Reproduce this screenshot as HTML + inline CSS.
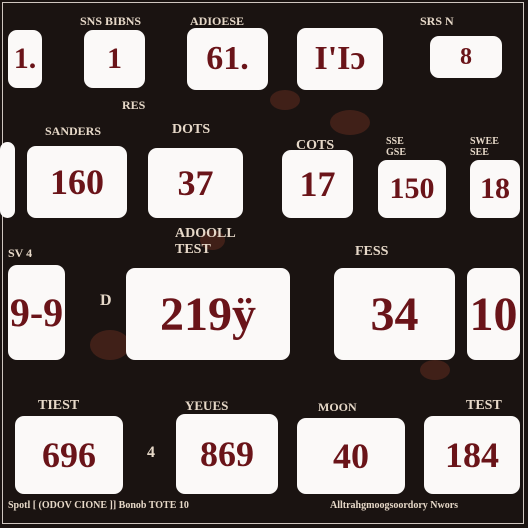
<!DOCTYPE html>
<html><head><meta charset="utf-8"><style>
html,body{margin:0;padding:0}
body{width:528px;height:528px;background:#1a1311;position:relative;overflow:hidden;font-family:"Liberation Sans",sans-serif}
.frame{position:absolute;left:2px;top:2px;width:522px;height:522px;border:1px solid #cfc6c0;box-sizing:border-box}
.b{position:absolute;background:#fbf9f8;border-radius:9px;color:#6a1419;font-weight:bold;display:flex;align-items:center;justify-content:center;font-family:"Liberation Serif",serif}
.l{position:absolute;color:#e6d8c8;font-size:12px;font-family:"Liberation Serif",serif;font-weight:bold;white-space:nowrap}
.d{position:absolute;border-radius:50%;background:#5a2a1e;opacity:.6}
</style></head><body>
<div class="d" style="left:270px;top:90px;width:30px;height:20px"></div>
<div class="d" style="left:330px;top:110px;width:40px;height:25px"></div>
<div class="d" style="left:90px;top:330px;width:40px;height:30px"></div>
<div class="d" style="left:420px;top:360px;width:30px;height:20px"></div>
<div class="d" style="left:200px;top:230px;width:25px;height:20px"></div>
<div class="frame"></div>

<div class="l" style="left:80px;top:14px">SNS BIBNS</div>
<div class="l" style="left:190px;top:14px">ADIOESE</div>
<div class="l" style="left:420px;top:14px">SRS N</div>
<div class="b" style="left:8px;top:30px;width:34px;height:58px;font-size:30px">1.</div>
<div class="b" style="left:84px;top:30px;width:61px;height:58px;font-size:30px">1</div>
<div class="b" style="left:187px;top:28px;width:81px;height:62px;font-size:34px">61.</div>
<div class="b" style="left:297px;top:28px;width:86px;height:62px;font-size:34px">I'Iɔ</div>
<div class="b" style="left:430px;top:36px;width:72px;height:42px;font-size:24px">8</div>
<div class="l" style="left:122px;top:98px">RES</div>

<div class="l" style="left:45px;top:124px">SANDERS</div>
<div class="l" style="left:172px;top:122px;font-size:14px">DOTS</div>
<div class="l" style="left:296px;top:138px;font-size:14px">COTS</div>
<div class="l" style="left:386px;top:136px;font-size:10px">SSE<br>GSE</div>
<div class="l" style="left:470px;top:136px;font-size:10px">SWEE<br>SEE</div>
<div class="b" style="left:0px;top:142px;width:15px;height:76px"></div>
<div class="b" style="left:27px;top:146px;width:100px;height:72px;font-size:36px">160</div>
<div class="b" style="left:148px;top:148px;width:95px;height:70px;font-size:36px">37</div>
<div class="b" style="left:282px;top:150px;width:71px;height:68px;font-size:36px">17</div>
<div class="b" style="left:378px;top:160px;width:68px;height:58px;font-size:30px">150</div>
<div class="b" style="left:470px;top:160px;width:50px;height:58px;font-size:30px">18</div>

<div class="l" style="left:175px;top:226px;font-size:14px">ADOOLL<br>TEST</div>
<div class="l" style="left:355px;top:244px;font-size:14px">FESS</div>
<div class="l" style="left:8px;top:246px">SV 4</div>
<div class="b" style="left:8px;top:265px;width:57px;height:95px;font-size:40px">9-9</div>
<div class="l" style="left:100px;top:292px;font-size:16px">D</div>
<div class="b" style="left:126px;top:268px;width:164px;height:92px;font-size:48px">219ÿ</div>
<div class="b" style="left:334px;top:268px;width:121px;height:92px;font-size:48px">34</div>
<div class="b" style="left:467px;top:268px;width:53px;height:92px;font-size:48px">10</div>

<div class="l" style="left:38px;top:398px;font-size:14px">TIEST</div>
<div class="l" style="left:185px;top:398px;font-size:13px">YEUES</div>
<div class="l" style="left:318px;top:400px">MOON</div>
<div class="l" style="left:466px;top:398px;font-size:14px">TEST</div>
<div class="b" style="left:15px;top:416px;width:108px;height:78px;font-size:36px">696</div>
<div class="l" style="left:147px;top:444px;font-size:16px">4</div>
<div class="b" style="left:176px;top:414px;width:102px;height:80px;font-size:36px">869</div>
<div class="b" style="left:297px;top:418px;width:108px;height:76px;font-size:36px">40</div>
<div class="b" style="left:424px;top:416px;width:96px;height:78px;font-size:36px">184</div>

<div class="l" style="left:8px;top:500px;font-size:10px">Spotl [ (ODOV CIONE ]] Bonob TOTE 10</div>
<div class="l" style="left:330px;top:500px;font-size:10px">Alltrahgmoogsoordory Nwors</div>
</body></html>
